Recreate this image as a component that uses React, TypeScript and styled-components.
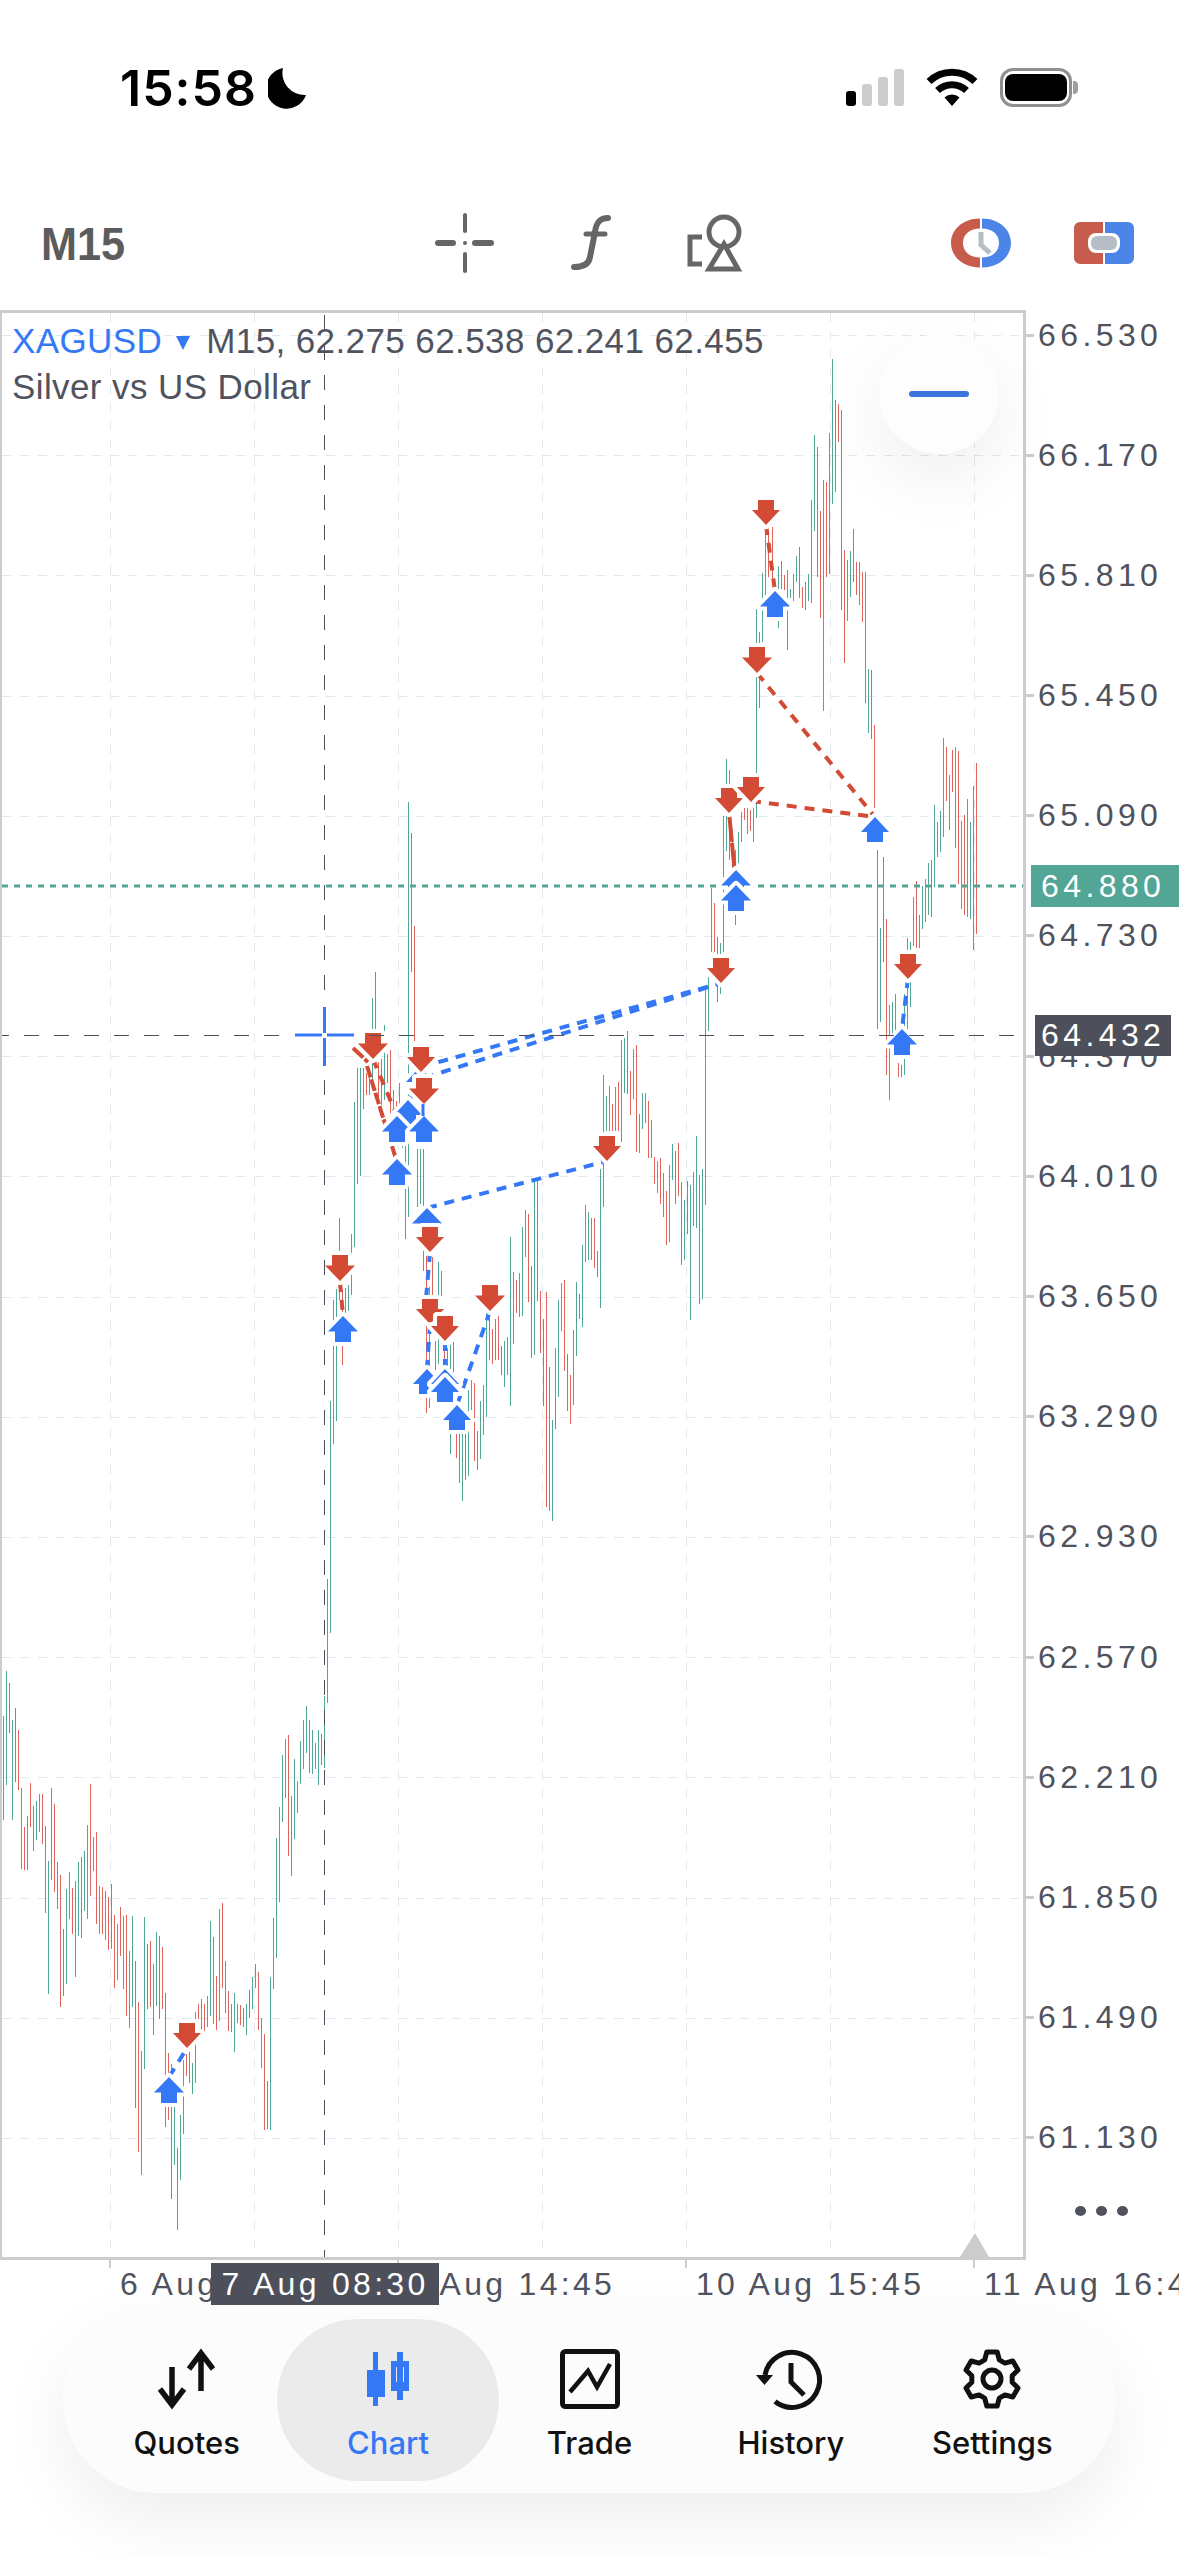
import React from 'react';
import styled, { createGlobalStyle } from 'styled-components';

const GlobalStyle = createGlobalStyle`
  html, body { margin: 0; padding: 0; background: #fff; }
  body { font-family: "Liberation Sans", Arial, sans-serif; }
`;

const BLUE = '#3478f6';
const RED = '#d34a35';
const GREEN_BAR = '#4fa795';
const RED_BAR = '#e0635a';
const TEXT = '#50535e';
const BORDER = '#cccccc';

/* ---------- chart data, read off the picture in px ---------- */
type Bar = { x: number; c: string; y1: number; y2: number };
const seg = (x0: number, dx: number, y0: number, sy: number, s: string): Bar[] =>
  s.trim().split(/\s*,\s*/).map((b, i) => {
    const [c, t, e] = b.split(/\s+/);
    return { x: x0 + dx * i, c, y1: y0 + Number(t) / sy, y2: y0 + Number(e) / sy };
  });

const BARS: Bar[] = [
  ...seg(3.3, 3, 1650, 2.613, `g 172 444, g 55 352, r 86 217, g 183 444, r 152 345, r 209 367, r 361 572, r 463 575, g 434 575, r 348 463,
    r 408 525, g 395 497, g 375 473, r 376 507, r 460 687, g 551 899, g 361 601, r 402 632, r 554 677, r 588 933,
    r 729 904, g 625 873, g 580 703, r 622 742, g 604 855, g 554 747, r 541 753, g 525 682, g 457 703, r 350 643,
    g 489 578, r 476 716, g 617 742, r 619 743, g 630 758, r 645 783, r 612 783, r 693 883, g 716 862, r 672 800,
    g 695 886, r 693 956, g 787 988, g 695 933, r 813 1197, r 920 1312, g 1048 1372, g 698 1095, r 767 936, r 760 933,
    r 821 1006, g 737 930, r 747 964, r 776 937, r 897 1247, r 1053 1227, r 1082 1435, g 1194 1345, r 1300 1515, g 1215 1385,
    g 1071 1265, r 1055 1112, r 1051 1132, g 1079 1160, g 946 1132, r 925 965, g 912 996, r 925 997, g 904 985, g 708 956,
    r 750 977, r 852 993, g 677 970, r 661 883, r 813 949, r 891 996, g 925 998, g 896 1051, g 925 975, r 928 980,
    r 936 985, g 925 1005, r 889 962, g 855 938, g 821 883, r 841 993, r 962 1092, r 1004 1256, r 1126 1252, g 855 1256,
    g 700 886, g 491 804, g 410 658, g 274 449, g 233 386, r 222 538, g 382 591, g 285 494, g 342 426, g 238 350,
    g 183 311, g 146 268, r 183 321, g 209 324, g 243 311, g 209 353, r 220 301, g 120 308, g -185 139`),
  ...seg(330.3, 3, 950, 2.85, `g 1284 1944, g 998 1408, g 965 1342, g 765 1000, r 970 1183, g 963 1035, g 955 1030, g 810 985, g 433 847, r 335 666,
    g 335 643, g 335 452, r 350 412, g 335 412, g 137 395, r 63 260, r 320 440, r 310 440, g 215 430, r 295 377,
    r 285 475, r 400 590, r 430 475, g 380 560, g 440 565, r 560 825, g -422 760, r -333 62, r -69 260, g 568 732,
    g 568 725, r 568 915, r 872 1320, g 960 1305, r 875 985, r 1115 1197, g 890 1180, r 915 985, r 1140 1190, r 1135 1185,
    g 1125 1435, r 1118 1205, r 1380 1447, r 1380 1520, g 1380 1570, r 1380 1510, g 1255 1500, g 1225 1310, r 1235 1458, r 1370 1482,
    g 1285 1450, g 1240 1382, g 1030 1333, r 1050 1170, r 1080 1180, r 1052 1170, r 1043 1168, r 1130 1212, g 1115 1245, g 1103 1212,
    g 818 1300, r 918 1122, r 940 1035, g 920 1045, g 790 1045, g 740 875, r 752 1003, r 900 1162, g 655 1155, r 648 1000`),
  ...seg(540.3, 3, 1000, 2.958, `r 861 1043, r 944 1200, r 865 1502, r 1086 1511, g 1243 1543, g 1030 1271, g 888 1175, g 837 978, r 828 1097, r 1047 1215,
    r 1109 1253, g 976 1197, g 834 1052, r 870 943, g 725 969, g 606 774, g 627 768, g 645 768, r 645 792, r 743 820,
    g 500 910, g 222 612, g 284 388, g 254 388, r 308 388, g 257 388, r 243 388, g 118 422, g 112 275, r 92 277,
    r 210 340, g 145 292, r 133 450, g 337 453, g 275 382, r 275 364, r 299 467, r 355 467, r 464 544, g 476 571,
    r 467 604, r 512 642, r 565 725, g 488 716, g 426 533, r 447 604, r 423 580, r 538 784, g 592 769, r 535 692,
    g 547 947, g 509 669, g 402 675, r 518 899, g 500 885, g -41 608, g -68 92`),
  ...seg(711.3, 3.01, 0, 1, `g 888 952, r 903 952, r 937 1002, g 943 994, g 816 952, g 759 851, g 770 860, g 830 900, g 850 925, g 832 863,
    g 812 842, r 808 820, g 808 834, r 810 831, g 808 842, g 609 818, g 632 708, g 573 642, g 532 597, r 530 577,
    r 527 583, r 583 590, g 566 628, r 561 589, r 575 590, g 570 650, g 589 598, g 574 601, g 556 582, r 547 598,
    r 587 608, g 582 610, g 574 601, g 500 603, g 435 531, r 447 577, r 511 618, g 480 711, r 482 577, g 433 574,
    g 359 504, r 400 492, r 404 442, r 410 610, r 550 663, g 560 621, g 551 597, r 529 582, r 562 595, g 562 605,
    r 572 622, r 572 703, g 669 733, r 670 739, r 725 808, r 850 1029, g 928 1022, r 857 962, r 919 1075, g 1005 1100,
    g 1002 1037, g 994 1037, r 1063 1077, r 1065 1077, g 994 1075, g 938 1029, g 942 1007, g 897 946, r 881 948, r 915 948,
    g 886 929, g 879 922, g 863 915, r 860 917, g 805 887, r 822 857, g 811 852, g 738 837, r 747 801, g 775 830,
    r 750 792, g 747 848, r 751 884, g 821 909, r 815 915, g 799 917, g 822 919, g 786 950, r 763 934`),
];

const PRICES = ['66.530', '66.170', '65.810', '65.450', '65.090', '64.730', '64.370', '64.010', '63.650', '63.290', '62.930', '62.570', '62.210', '61.850', '61.490', '61.130'];
const PRICE_Y = PRICES.map((_, i) => Math.round(335 + i * 120.2) + 0.5);
const GRID_X = [110.5, 254.5, 398.5, 542.5, 686.5, 830.5, 974.5];

type Arrow = { d: 'u' | 'd'; cx: number; y: number; w?: number };
const ARROWS: Arrow[] = [
  { d: 'u', cx: 169, y: 2077 }, { d: 'd', cx: 187, y: 2023, w: 28 },
  { d: 'u', cx: 420, y: 1067, w: 28 }, { d: 'u', cx: 408, y: 1100, w: 28 }, { d: 'u', cx: 397, y: 1116 },
  { d: 'd', cx: 421, y: 1047, w: 28 }, { d: 'd', cx: 424, y: 1078 }, { d: 'u', cx: 424, y: 1116 },
  { d: 'd', cx: 373, y: 1033 }, { d: 'u', cx: 397, y: 1159 },
  { d: 'u', cx: 427, y: 1208 }, { d: 'd', cx: 430, y: 1227, w: 28 },
  { d: 'd', cx: 340, y: 1255 }, { d: 'u', cx: 343, y: 1316 },
  { d: 'u', cx: 427, y: 1369, w: 28 }, { d: 'u', cx: 445, y: 1369, w: 28 }, { d: 'u', cx: 445, y: 1377, w: 28 },
  { d: 'd', cx: 430, y: 1299, w: 28 }, { d: 'd', cx: 445, y: 1316, w: 28 }, { d: 'd', cx: 490, y: 1285 },
  { d: 'u', cx: 457, y: 1405, w: 28 }, { d: 'd', cx: 607, y: 1136, w: 28 },
  { d: 'd', cx: 766, y: 500, w: 28 }, { d: 'u', cx: 775, y: 591 }, { d: 'd', cx: 757, y: 647 },
  { d: 'd', cx: 729, y: 788, w: 28 }, { d: 'd', cx: 751, y: 777, w: 28 },
  { d: 'u', cx: 736, y: 870 }, { d: 'u', cx: 736, y: 885 }, { d: 'd', cx: 721, y: 958, w: 28 },
  { d: 'u', cx: 875, y: 817, w: 28 }, { d: 'd', cx: 908, y: 954, w: 28 }, { d: 'u', cx: 902, y: 1029 },
];

const arrowPoints = ({ d, cx, y, w = 30 }: Arrow) => {
  const h = w === 30 ? 26 : 25;
  const head = w === 30 ? 15.5 : 15;
  const s = 8;
  const hw = w / 2;
  if (d === 'u') {
    return `${cx},${y} ${cx + hw},${y + head} ${cx + s},${y + head} ${cx + s},${y + h} ${cx - s},${y + h} ${cx - s},${y + head} ${cx - hw},${y + head}`;
  }
  const sh = h - head;
  return `${cx - s},${y} ${cx + s},${y} ${cx + s},${y + sh} ${cx + hw},${y + sh} ${cx},${y + h} ${cx - hw},${y + sh} ${cx - s},${y + sh}`;
};

type Link = [number, number, number, number, 'b' | 'r', string?];
const LINKS: Link[] = [
  [169, 2077, 187, 2048, 'b'],
  [353, 1048, 368, 1062, 'r', '14 2'], [367, 1066, 396, 1159, 'r', '12 2'], [373, 1059, 397, 1116, 'r'],
  [340, 1282, 343, 1316, 'r'],
  [421, 1067, 721, 983, 'b'], [424, 1078, 721, 983, 'b'], [410, 1100, 421, 1067, 'b'],
  [427, 1208, 607, 1161, 'b'],
  [430, 1252, 426, 1299, 'b'], [430, 1324, 427, 1369, 'b'], [445, 1341, 445, 1377, 'b'],
  [457, 1405, 490, 1311, 'b'],
  [766, 525, 775, 591, 'r'], [757, 673, 875, 817, 'r'], [751, 801, 875, 817, 'r'],
  [729, 812, 736, 885, 'r', '30 1'], [908, 978, 902, 1029, 'b'],
];

const gearPath = () => {
  const pts: string[] = [];
  for (let i = 0; i < 6; i++) {
    const a = -90 + 60 * i;
    [[-21, 20.5], [-11, 27.5], [11, 27.5], [21, 20.5]].forEach(([o, r]) => {
      const t = ((a + o) * Math.PI) / 180;
      pts.push(`${(30 + r * Math.cos(t)).toFixed(1)},${(30 + r * Math.sin(t)).toFixed(1)}`);
    });
  }
  return pts.join(' ');
};

/* ---------- page ---------- */
const Page = styled.div`
  position: relative;
  width: 1179px;
  height: 2556px;
  overflow: hidden;
  background: #fff;
`;

const StatusBar = styled.header`
  height: 190px;
  box-sizing: border-box;
  padding: 68px 107px 0 120px;
  display: flex;
  justify-content: space-between;
  align-items: flex-start;
`;
const Clock = styled.div`
  display: flex;
  align-items: center;
  gap: 11px;
  height: 40px;
`;
const ClockText = styled.span`
  font-family: Inter, "Liberation Sans", sans-serif;
  font-weight: 600;
  font-size: 50px;
  letter-spacing: 1px;
  line-height: 40px;
  color: #000;
`;
const StatusIcons = styled.div`
  display: flex;
  align-items: flex-start;
  gap: 22px;
  height: 40px;
`;
const Battery = styled.div`
  position: relative;
  width: 72px;
  height: 39px;
  box-sizing: border-box;
  border: 3px solid #8f8f8f;
  border-radius: 13px;
  padding: 3px 2px;
  &::after {
    content: '';
    position: absolute;
    right: -9px;
    top: 10px;
    width: 5px;
    height: 13px;
    background: #a0a0a0;
    border-radius: 0 4px 4px 0;
  }
`;
const BatteryFill = styled.div`
  height: 100%;
  background: #000;
  border-radius: 8px;
`;

const Toolbar = styled.div`
  height: 120px;
  box-sizing: border-box;
  padding: 0 45px 14px 41px;
  display: flex;
  align-items: center;
  color: #666;
`;
const Period = styled.span`
  width: 394px;
  font-weight: 700;
  font-size: 47px;
  color: #5c5c5c;
  transform: scaleX(0.92);
  transform-origin: left center;
`;
const ToolGroup = styled.div`
  display: flex;
  align-items: center;
  gap: 76px;
  flex: 1;
`;
const BrandGroup = styled.div`
  display: flex;
  align-items: center;
  gap: 63px;
`;

const ChartRow = styled.section`
  position: relative;
  display: flex;
  width: 1179px;
  height: 1950px;
`;
const Plot = styled.div`
  position: relative;
  width: 1026px;
  height: 1950px;
  box-sizing: border-box;
  border: 3px solid ${BORDER};
  border-left-width: 2px;
  flex: none;
`;
const PlotSvg = styled.svg`
  display: block;
  width: 1021px;
  height: 1944px;
`;
const Legend = styled.div`
  position: absolute;
  left: 10px;
  top: 5px;
  font-size: 35px;
  line-height: 46px;
  letter-spacing: 0.4px;
  color: ${TEXT};
`;
const LegendLine = styled.div`
  display: flex;
  align-items: center;
  white-space: nowrap;
`;
const Symbol = styled.span`
  color: ${BLUE};
`;
const Caret = styled.i`
  width: 0;
  height: 0;
  margin: 4px 16px 0 14px;
  border-left: 7px solid transparent;
  border-right: 7px solid transparent;
  border-top: 14px solid ${BLUE};
`;
const ZoomButton = styled.div`
  position: absolute;
  left: 879px;
  top: 24px;
  width: 120px;
  height: 120px;
  border-radius: 50%;
  background: #fdfdfd;
  box-shadow: 0 24px 70px rgba(0, 0, 0, 0.07);
  display: flex;
  align-items: center;
  justify-content: center;
`;
const ZoomBar = styled.div`
  width: 60px;
  height: 6px;
  border-radius: 3px;
  background: #3b74dc;
`;

const PriceAxis = styled.div`
  flex: 1;
  margin-top: -35.1px;
  height: 1985px;
  display: flex;
  flex-direction: column;
`;
const PriceRow = styled.div`
  height: 120.2px;
  flex: none;
  display: flex;
  align-items: center;
  gap: 4px;
`;
const PriceTick = styled.i`
  width: 8px;
  height: 3px;
  background: ${BORDER};
`;
const axisText = `
  font-size: 32px;
  color: ${TEXT};
`;
const PriceText = styled.span`
  ${axisText}
  letter-spacing: 4.4px;
`;
const PriceTag = styled.div<{ $bg: string; $left: number; $top: number; $w: number; $h: number }>`
  position: absolute;
  left: ${(p) => p.$left}px;
  top: ${(p) => p.$top}px;
  width: ${(p) => p.$w}px;
  height: ${(p) => p.$h}px;
  background: ${(p) => p.$bg};
  color: #fff;
  font-size: 32px;
  letter-spacing: 4.4px;
  display: flex;
  align-items: center;
  box-sizing: border-box;
  padding-left: ${(p) => 1041 - p.$left}px;
`;
const MoreDots = styled.div`
  position: absolute;
  left: 1075px;
  top: 1896px;
  display: flex;
  gap: 10px;
`;
const Dot = styled.i`
  width: 11px;
  height: 10px;
  border-radius: 50%;
  background: ${TEXT};
`;

const TimeAxis = styled.div`
  position: relative;
  height: 47px;
  padding-left: 110px;
  display: flex;
  overflow: hidden;
  white-space: nowrap;
`;
const TimeCell = styled.div`
  position: relative;
  flex: none;
  width: 288px;
  box-sizing: border-box;
  padding: 1px 0 0 10px;
  height: 47px;
  line-height: 46px;
  ${axisText}
  letter-spacing: 3.3px;
  &::before {
    content: '';
    position: absolute;
    left: -1px;
    top: 0;
    width: 2px;
    height: 8px;
    background: ${BORDER};
  }
`;
const TimeTag = styled.div`
  position: absolute;
  left: 211px;
  top: 3px;
  width: 228px;
  height: 42px;
  background: #4d505b;
  color: #fff;
  font-size: 32px;
  letter-spacing: 3.3px;
  line-height: 42px;
  text-align: center;
`;

const TabBar = styled.nav`
  width: 1053px;
  height: 186px;
  margin-left: 63px;
  box-sizing: border-box;
  padding: 0 23px;
  border-radius: 93px;
  background: #fcfcfc;
  box-shadow: 0 26px 70px rgba(0, 0, 0, 0.07);
  display: flex;
`;
const Tab = styled.div<{ $active?: boolean }>`
  position: relative;
  flex: 1;
  display: flex;
  flex-direction: column;
  align-items: center;
  padding-top: 42px;
  color: ${(p) => (p.$active ? BLUE : '#111')};
  &::before {
    content: '';
    display: ${(p) => (p.$active ? 'block' : 'none')};
    position: absolute;
    left: -10px;
    right: -10px;
    top: 12px;
    height: 162px;
    border-radius: 81px;
    background: #ebebeb;
  }
`;
const TabIcon = styled.svg`
  position: relative;
  display: block;
  height: 60px;
`;
const TabLabel = styled.span`
  position: relative;
  margin-top: 16px;
  font-family: Inter, "Liberation Sans", sans-serif;
  font-weight: 500;
  font-size: 31px;
  line-height: 36px;
`;

/* ---------- icons ---------- */
const Moon = () => (
  <svg width="39" height="41" viewBox="0 0 39 41">
    <path d="M15 0A20.5 20.5 0 1 0 38 27A22 22 0 0 1 15 0Z" fill="#000" />
  </svg>
);
const Signal = () => (
  <svg width="58" height="38" viewBox="0 0 58 38">
    <rect x="0" y="23" width="10" height="15" rx="3" fill="#000" />
    <rect x="16" y="16" width="10" height="22" rx="3" fill="#ccc" />
    <rect x="32" y="9" width="10" height="29" rx="3" fill="#ccc" />
    <rect x="48" y="1" width="10" height="37" rx="3" fill="#ccc" />
  </svg>
);
const Wifi = () => (
  <svg width="52" height="38" viewBox="0 0 52 38" fill="none" stroke="#000" strokeWidth="7">
    <path d="M3 13.5A33 33 0 0 1 49 13.5" />
    <path d="M11.5 22.5A21 21 0 0 1 40.5 22.5" />
    <path d="M26 38L18.5 29.5A11 11 0 0 1 33.5 29.5Z" fill="#000" stroke="none" />
  </svg>
);
const CrossIcon = () => (
  <svg width="60" height="60" viewBox="0 0 60 60" fill="#666">
    <rect x="28" y="0" width="4" height="20" rx="2" />
    <rect x="28" y="39" width="4" height="21" rx="2" />
    <rect x="0" y="27" width="21" height="6" rx="3" />
    <rect x="37" y="27" width="22" height="6" rx="3" />
    <rect x="28" y="28" width="4" height="4" rx="2" />
  </svg>
);
const FunctionIcon = () => (
  <svg width="40" height="56" viewBox="0 0 40 56" fill="none" stroke="#666" strokeWidth="6" strokeLinecap="round">
    <path d="M37 3C28 3 25 9 24 17L19 42C18 49 13 52 3 52" />
    <path d="M15 19H34" strokeWidth="5" />
  </svg>
);
const ObjectsIcon = () => (
  <svg width="56" height="58" viewBox="0 0 56 58" fill="none" stroke="#666" strokeWidth="5">
    <path d="M15 23H3V50H15" />
    <circle cx="37" cy="18" r="15" fill="#fff" />
    <path d="M37 30L51 55H22Z" fill="#fff" strokeLinejoin="miter" />
  </svg>
);
const TimerIcon = () => (
  <svg width="60" height="50" viewBox="0 0 60 50">
    <path d="M29 0.5C12 0.5 0 11.5 0 25C0 38.5 12 49.5 29 49.5V39.5C18 39.5 12 33 12 25C12 17 18 10.5 29 10.5Z" fill="#c85c4c" />
    <path d="M31 0.5C48 0.5 60 11.5 60 25C60 38.5 48 49.5 31 49.5V39.5C42 39.5 48 33 48 25C48 17 42 10.5 31 10.5Z" fill="#4d84e8" />
    <path d="M30 14V27L39 35" fill="none" stroke="#b4bec4" strokeWidth="5" />
  </svg>
);
const BrokerIcon = () => (
  <svg width="60" height="42" viewBox="0 0 60 42">
    <path d="M29 0H6A6 6 0 0 0 0 6V36A6 6 0 0 0 6 42H29V31H22A8 8 0 0 1 14 23V19A8 8 0 0 1 22 11H29Z" fill="#c85c4c" />
    <path d="M31 0H54A6 6 0 0 1 60 6V36A6 6 0 0 1 54 42H31V31H38A8 8 0 0 0 46 23V19A8 8 0 0 0 38 11H31Z" fill="#4d84e8" />
    <rect x="17" y="14" width="26" height="14" rx="6" fill="#b4bec4" />
  </svg>
);

const PlotDrawing = () => (
  <PlotSvg viewBox="2 313 1021 1944">
    {PRICE_Y.map((y) => (
      <line key={y} x1="2" x2="1023" y1={y} y2={y} stroke="#e1e9ee" strokeWidth="1" strokeDasharray="9 9" />
    ))}
    {GRID_X.map((x) => (
      <line key={x} x1={x} x2={x} y1="313" y2="2257" stroke="#e1e9ee" strokeWidth="1" strokeDasharray="9 9" />
    ))}
    <g shapeRendering="crispEdges">
      {BARS.map((b) => (
        <rect
          key={b.x}
          x={Math.round(b.x)}
          y={Math.round(b.y1)}
          width="1"
          height={Math.max(1, Math.round(b.y2 - b.y1))}
          fill={b.c === 'g' ? GREEN_BAR : RED_BAR}
        />
      ))}
    </g>
    <line x1="2" x2="1023" y1="886" y2="886" stroke="#53a596" strokeWidth="3" strokeDasharray="6 6" />
    {LINKS.map(([x1, y1, x2, y2, c, dash]) => (
      <line
        key={`${x1}-${y1}-${x2}`}
        x1={x1}
        y1={y1}
        x2={x2}
        y2={y2}
        stroke={c === 'b' ? BLUE : RED}
        strokeWidth="4"
        strokeDasharray={dash ?? '10 8'}
      />
    ))}
    {ARROWS.map((a) => (
      <polygon
        key={`${a.d}-${a.cx}-${a.y}`}
        points={arrowPoints(a)}
        fill={a.d === 'u' ? BLUE : RED}
        stroke="#fff"
        strokeWidth="8"
        strokeLinejoin="round"
        paintOrder="stroke"
      />
    ))}
    <line x1="423" x2="423" y1="1104" y2="1116" stroke={BLUE} strokeWidth="3" />
    <g stroke="#4d505b" strokeWidth="1" strokeDasharray="15 15">
      <line x1="279" x2="0" y1="1035.5" y2="1035.5" />
      <line x1="369" x2="1023" y1="1035.5" y2="1035.5" />
      <line x1="324.5" x2="324.5" y1="990" y2="313" />
      <line x1="324.5" x2="324.5" y1="1080" y2="2257" />
    </g>
    <g stroke={BLUE} strokeWidth="3">
      <line x1="295" x2="322" y1="1035" y2="1035" />
      <line x1="327" x2="354" y1="1035" y2="1035" />
      <line x1="324.5" x2="324.5" y1="1007" y2="1033" />
      <line x1="324.5" x2="324.5" y1="1038" y2="1066" />
    </g>
    <path d="M960 2257L975 2233L989 2257Z" fill={BORDER} />
  </PlotSvg>
);

const TABS = [
  {
    label: 'Quotes',
    box: '0 0 60 60',
    icon: (
      <g fill="none" stroke="currentColor" strokeWidth="5.5">
        <path d="M15 18V54M3 40L15 56L27 40" />
        <path d="M44 42V6M32 20L44 4L56 20" />
      </g>
    ),
  },
  {
    label: 'Chart',
    box: '0 0 60 60',
    active: true,
    icon: (
      <g fill={BLUE}>
        <rect x="15" y="3" width="5" height="54" />
        <rect x="9" y="21" width="18" height="27" />
        <rect x="39" y="3" width="6" height="48" />
        <path fillRule="evenodd" d="M33 12H51V42H33ZM38 18V33H46V18Z" />
      </g>
    ),
  },
  {
    label: 'Trade',
    box: '0 0 60 60',
    icon: (
      <g fill="none" stroke="currentColor" strokeWidth="5">
        <rect x="2.5" y="2.5" width="55" height="55" rx="3" />
        <path d="M10 43L28 22L37 38L50 15" strokeWidth="4.5" />
      </g>
    ),
  },
  {
    label: 'History',
    box: '0 0 66 60',
    icon: (
      <g fill="none" stroke="currentColor" strokeWidth="5">
        <path d="M7 26A27.5 27.5 0 1 1 17 52.5" />
        <path d="M33 14V33L46 46" />
        <path d="M-2 26H15L6.5 36Z" fill="currentColor" stroke="none" />
      </g>
    ),
  },
  {
    label: 'Settings',
    box: '0 0 60 60',
    icon: (
      <g fill="none" stroke="currentColor" strokeWidth="5" strokeLinejoin="round">
        <polygon points={gearPath()} />
        <circle cx="30" cy="30" r="9" />
      </g>
    ),
  },
];

export default function App() {
  return (
    <Page>
      <GlobalStyle />
      <StatusBar>
        <Clock>
          <ClockText>15:58</ClockText>
          <Moon />
        </Clock>
        <StatusIcons>
          <Signal />
          <Wifi />
          <Battery>
            <BatteryFill />
          </Battery>
        </StatusIcons>
      </StatusBar>

      <Toolbar>
        <Period>M15</Period>
        <ToolGroup>
          <CrossIcon />
          <FunctionIcon />
          <ObjectsIcon />
        </ToolGroup>
        <BrandGroup>
          <TimerIcon />
          <BrokerIcon />
        </BrandGroup>
      </Toolbar>

      <ChartRow>
        <Plot>
          <PlotDrawing />
          <Legend>
            <LegendLine>
              <Symbol>XAGUSD</Symbol>
              <Caret />
              M15, 62.275 62.538 62.241 62.455
            </LegendLine>
            <LegendLine>Silver vs US Dollar</LegendLine>
          </Legend>
        </Plot>
        <PriceAxis>
          {PRICES.map((p) => (
            <PriceRow key={p}>
              <PriceTick />
              <PriceText>{p}</PriceText>
            </PriceRow>
          ))}
        </PriceAxis>
        <ZoomButton>
          <ZoomBar />
        </ZoomButton>
        <PriceTag $bg="#53a596" $left={1031} $top={555} $w={148} $h={42}>64.880</PriceTag>
        <PriceTag $bg="#4d505b" $left={1035} $top={705} $w={136} $h={41}>64.432</PriceTag>
        <MoreDots>
          <Dot />
          <Dot />
          <Dot />
        </MoreDots>
      </ChartRow>

      <TimeAxis>
        <TimeCell>6 Aug 14:30</TimeCell>
        <TimeCell>7 Aug 14:45</TimeCell>
        <TimeCell>10 Aug 15:45</TimeCell>
        <TimeCell>11 Aug 16:45</TimeCell>
        <TimeTag>7 Aug 08:30</TimeTag>
      </TimeAxis>

      <TabBar>
        {TABS.map((t) => (
          <Tab key={t.label} $active={t.active}>
            <TabIcon viewBox={t.box} width={t.box === '0 0 66 60' ? 66 : 60} overflow="visible">
              {t.icon}
            </TabIcon>
            <TabLabel>{t.label}</TabLabel>
          </Tab>
        ))}
      </TabBar>
    </Page>
  );
}
